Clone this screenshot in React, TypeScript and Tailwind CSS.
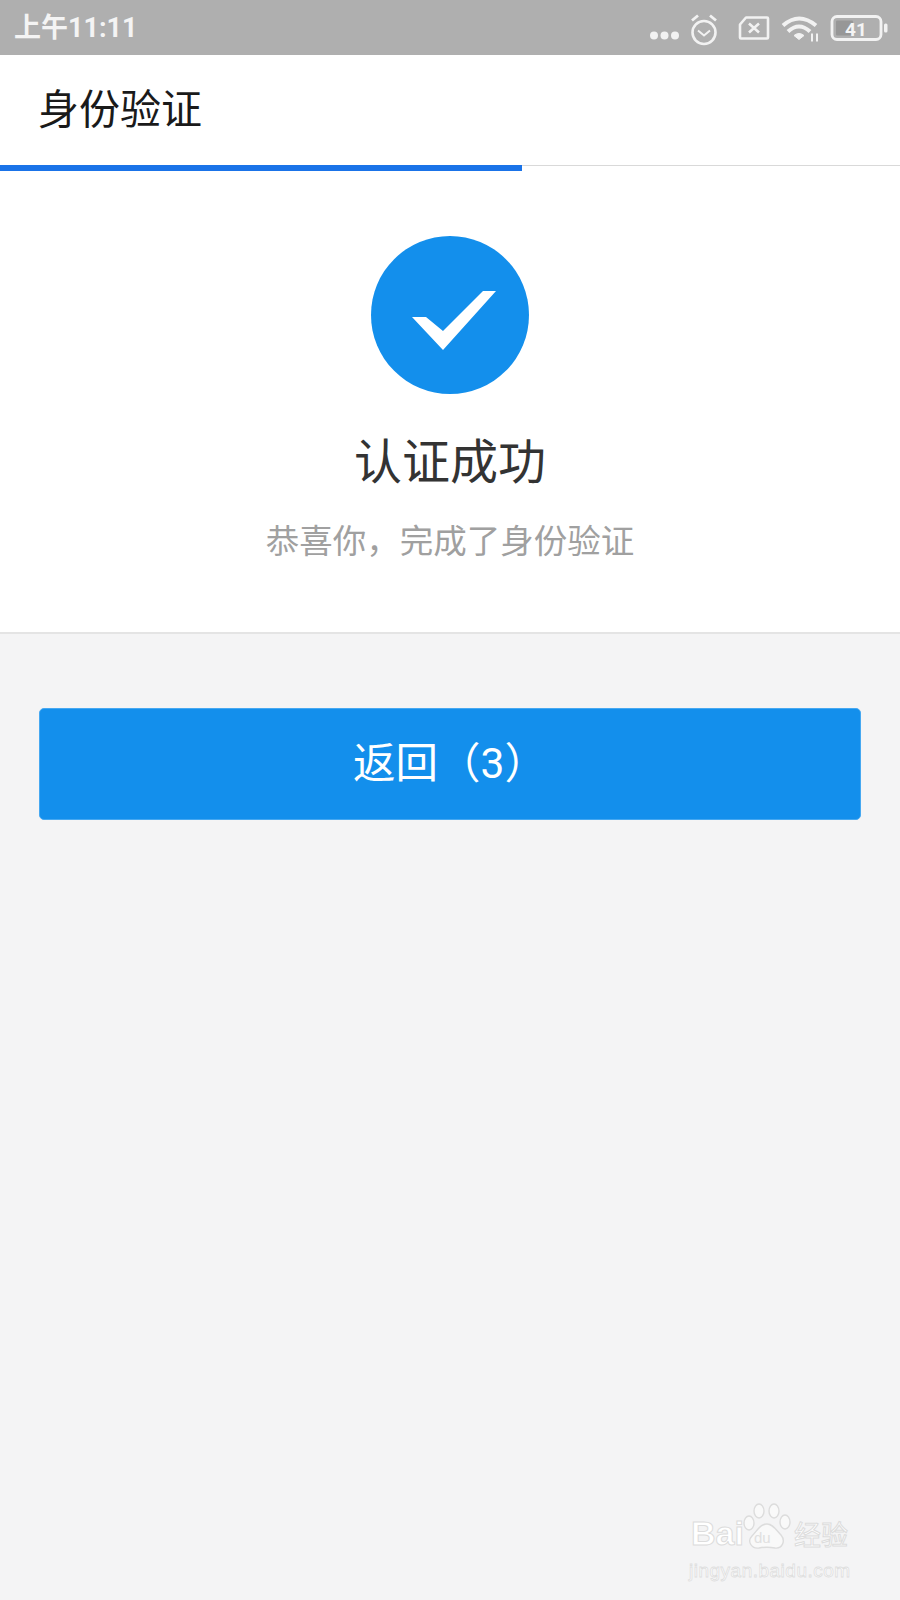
export default function App() {
  const cjk = "font-['Roboto','Noto_Sans_CJK_SC',sans-serif]";
  return (
    <div className={`w-[900px] h-[1600px] flex flex-col bg-[#f4f4f5] overflow-hidden relative ${cjk}`}>
      <div className="h-[55px] bg-[#afafaf] flex items-center justify-between pl-[14px] pr-[8px] text-[#f4f4f4]">
        <span className="text-[27px] font-bold leading-none mt-[1px]">上午11:11</span>
        <svg width="256" height="40" viewBox="0 0 256 40" fill="none" stroke="#f2f2f2" strokeWidth="2.6">
          <g transform="translate(-636,-7.5)">
            <g fill="#f2f2f2" stroke="none">
              <circle cx="654" cy="35" r="4" />
              <circle cx="664.500" cy="35" r="4" />
              <circle cx="675" cy="35" r="4" />
            </g>
            <circle cx="704" cy="32" r="11.500" />
            <path d="M698 30 L704 35 L710 30" strokeWidth="2" />
            <path d="M692 20 L698 15 M716 20 L710 15" strokeWidth="2.800" />
            <path d="M746 17 H767 Q768 17 768 18 V37 Q768 38 767 38 H741 Q740 38 740 37 V24 Z" strokeLinejoin="round" />
            <path d="M749 23 L759 32 M759 23 L749 32" strokeWidth="2.600" />
            <path d="M783 25 Q799 11 816 25" strokeWidth="4" />
            <path d="M788 31 Q799 21 810 31" strokeWidth="4" />
            <path d="M794 35 L799 39 L804 35 Q799 31 794 35 Z" fill="#f2f2f2" strokeWidth="1" />
            <path d="M812 41 V33 M817 33 V41" strokeWidth="2" />
            <rect x="832" y="16" width="49" height="23" rx="5" strokeWidth="2.800" />
            <rect x="836" y="20" width="17" height="15" rx="1" fill="#979797" stroke="none" />
            <rect x="884" y="23" width="3.500" height="9" rx="1.500" fill="#f2f2f2" stroke="none" />
            <text x="856" y="35" fontSize="19" fontWeight="700" fill="#f4f4f4" stroke="none" textAnchor="middle" fontFamily="Roboto">41</text>
          </g>
        </svg>
      </div>

      <div className="h-[110px] bg-white flex items-center pl-[38px] text-[41px] leading-none text-[#1a1a1a]">
        身份验证
      </div>

      <div className="bg-white h-[469px] flex flex-col items-center border-b-2 border-[#e4e4e4]">
        <div className="w-full flex h-[6px] shrink-0">
          <div className="w-[522px] bg-[#1a73e8]" />
          <div className="flex-1 border-t border-[#d9d9d9]" />
        </div>
        <div className="mt-[65px] w-[158px] h-[158px] rounded-full bg-[#138fec] shrink-0">
          <svg width="158" height="158" viewBox="0 0 158 158">
            <path d="M41 81 H55 L72 95 L112 55 H125 L72 114 Z" fill="#fff" />
          </svg>
        </div>
        <div className="mt-[39px] text-[48px] leading-[60px] text-[#333333]">认证成功</div>
        <div className="mt-[27px] text-[33.500px] leading-[44px] text-[#a0a0a0]">恭喜你，完成了身份验证</div>
      </div>

      <div className="px-[39px] mt-[74px]">
        <div className="h-[112px] rounded-[5px] bg-[#138fec] border border-[#46a8f1] flex items-center justify-center text-white text-[42.500px] leading-none">
          返回（3）
        </div>
      </div>

      <div className="absolute left-[691px] top-[1503px] w-[170px] h-[90px] text-white">
        <div className="flex items-end h-[47px]">
          <span className="shrink-0 w-[51px] font-['Liberation_Sans',sans-serif] font-bold text-[34px] leading-none [-webkit-text-stroke:1px_#dcdcdc]">Bai</span>
          <span className="relative shrink-0 w-[50px] h-[47px]">
            <svg className="absolute left-0 top-0" width="50" height="47" viewBox="0 0 50 47" fill="#f9f9f9" stroke="#dcdcdc" strokeWidth="1.400">
              <ellipse cx="7" cy="20" rx="5" ry="7" />
              <ellipse cx="17" cy="8" rx="5" ry="7" />
              <ellipse cx="32" cy="8" rx="5" ry="7" />
              <ellipse cx="43" cy="19" rx="5" ry="7" />
              <path d="M25 21 C31 21 34 27 39 32 C44 38 40 46 33 45 C28 44 22 44 17 45 C9 46 5 38 10 33 C15 28 18 21 25 21 Z" />
            </svg>
            <span className="absolute left-[12px] top-[27px] text-[15px] leading-none text-[#e0e0e0] font-['Liberation_Sans',sans-serif]">du</span>
          </span>
          <span className="ml-[2px] shrink-0 whitespace-nowrap text-[27px] leading-none [-webkit-text-stroke:1px_#dcdcdc]">经验</span>
        </div>
        <div className="mt-[11px] ml-[-2px] text-[19px] leading-none tracking-[0.5px] whitespace-nowrap font-['Liberation_Sans',sans-serif] [-webkit-text-stroke:0.8px_#dedede]">jingyan.baidu.com</div>
      </div>
    </div>
  );
}
